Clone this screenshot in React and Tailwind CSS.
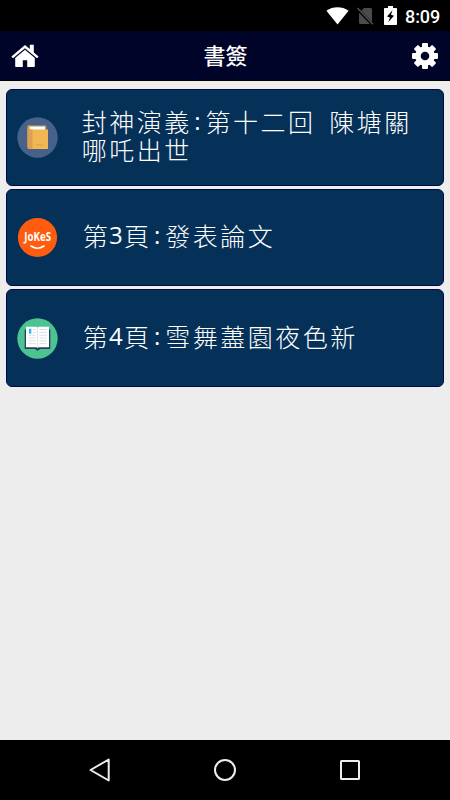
import { Fragment } from "react";

const BOOKMARKS = [
  { id: 1, icon: "book", lines: ["封神演義:第十二回 陳塘關", "哪吒出世"] },
  { id: 2, icon: "jokes", lines: ["第3頁:發表論文"] },
  { id: 3, icon: "reader", lines: ["第4頁:雪舞藎園夜色新"] },
];

function StatusBar() {
  return (
    <div className="flex h-[31px] items-center justify-end bg-black pr-[10px] text-white">
      <svg width="23" height="18" viewBox="0 0 23 18" className="mr-[8px]">
        <path d="M.4 3.7C6.9-.9 16.1-.9 22.6 3.7L11.5 17.5z" fill="#fff" />
      </svg>
      <svg width="17" height="18" viewBox="0 0 17 18" className="mr-[10px]">
        <path d="M7 1h6.5q1.5 0 1.5 1.5V17H3.5Q2 17 2 15.5V6z" fill="#4b4b4b" />
        <path d="M0 1.2L15.5 17.5" stroke="#000" strokeWidth="3" />
        <path d="M.5 1L16 17.3" stroke="#565656" strokeWidth="1.3" />
      </svg>
      <svg width="13" height="19" viewBox="0 0 13 19" className="mr-[8px]">
        <path d="M4 0h5v2h3.2q.8 0 .8.8v15.4q0 .8-.8.8H.8q-.8 0-.8-.8V2.8Q0 2 .8 2H4z" fill="#fff" />
        <path d="M8.5 4.2L3 10.6l3 .9-1.8 4.8 5.8-6.6-3-1z" fill="#000" />
      </svg>
      <span className="w-[35px] whitespace-nowrap pt-[2px] font-['Roboto',sans-serif] text-[18px] font-medium leading-[29px] tracking-[-0.1px]">
        8:09
      </span>
    </div>
  );
}

function HomeIcon() {
  return (
    <svg width="28" height="24" viewBox="0 0 28 24" fill="#fff">
      <path d="M14 1L.7 12.2q-.3.7.3 1.3.8.8 1.6.2L14 4.2l11.4 9.5q.8.6 1.6-.2.6-.6.3-1.3l-4.5-3.8V.8h-4v4.3z" />
      <path d="M14 5.8L4.2 14v8.3q0 .8.8.8h6.8v-6.8h4.4v6.8H23q.8 0 .8-.8V14z" />
    </svg>
  );
}

function GearIcon() {
  return (
    <svg width="26" height="26" viewBox="0 0 26 26">
      <g fill="#fff">
        <rect x="10" y="0" width="6" height="26" rx="1" />
        <rect x="10" y="0" width="6" height="26" rx="1" transform="rotate(45 13 13)" />
        <rect x="10" y="0" width="6" height="26" rx="1" transform="rotate(90 13 13)" />
        <rect x="10" y="0" width="6" height="26" rx="1" transform="rotate(135 13 13)" />
        <circle cx="13" cy="13" r="9.8" />
      </g>
      <circle cx="13" cy="13" r="4.3" fill="#000428" />
    </svg>
  );
}

function BookIcon() {
  return (
    <svg width="41" height="41" viewBox="0 0 41 41">
      <circle cx="20.5" cy="20.5" r="20.2" fill="#47628a" />
      <path d="M12 9.3h16.5V13H12z" fill="#fffdf5" />
      <path d="M10.5 10.5q0-2.2 2-2.2v4.2H31V32H12.5q-2 0-2-2z" fill="#f0b753" />
      <path d="M10.5 10.5q0-2.2 2-2.2v4.2h3V32h-3q-2 0-2-2z" fill="#dda051" />
      <path d="M12 8.6h17v4.2" fill="none" stroke="#b98a5a" strokeWidth=".8" />
      <path d="M18 27h9l-2 2h-5z" fill="#e6aa49" />
    </svg>
  );
}

function JokesIcon() {
  return (
    <svg width="41" height="41" viewBox="0 0 41 41">
      <circle cx="20.5" cy="20.5" r="19.6" fill="#ff5c10" />
      <text
        x="7.3"
        y="23.7"
        textLength="26.8"
        lengthAdjust="spacingAndGlyphs"
        fill="#fff"
        fontSize="13"
        className="font-['Open_Sans',sans-serif] font-bold"
      >
        JoKeS
      </text>
      <path d="M14 29q6.5 4.6 13 0" fill="none" stroke="#fff" strokeWidth="1.6" strokeLinecap="round" />
    </svg>
  );
}

function ReaderIcon() {
  return (
    <svg width="41" height="41" viewBox="0 0 41 41">
      <circle cx="20.5" cy="20.5" r="20.2" fill="#4bc492" />
      <path d="M7.7 11.5h25.6V31H23q-2.5 3.2-5 0H7.7z" fill="#303b63" />
      <path d="M9 8.8h10.5l1 1 1-1H32v20.4H21.5l-1 .8-1-.8H9z" fill="#fff" />
      <path d="M20.5 10v19.5" stroke="#d9dce3" strokeWidth=".8" />
      <path
        d="M16 11.5h2.8M16 14.3h2.8M11.3 17.2h7.5M11.3 20h7.5M11.3 22.8h7.5M11.3 25.6h7.5M22.3 11.5h7.5M22.3 14.3h7.5M22.3 17.2h7.5M22.3 20h7.5M22.3 22.8h7.5M22.3 25.6h7.5"
        stroke="#dcdee4"
        strokeWidth="1"
      />
      <path d="M12 10.7h2.3v5H12z" fill="#24bde4" />
    </svg>
  );
}

const ICONS = { book: BookIcon, jokes: JokesIcon, reader: ReaderIcon };

// Latin characters take half of a CJK cell
function Line({ text }) {
  return (
    <p className="flex h-[28px] whitespace-pre">
      {text.split("").map((ch, i) => (
        <Fragment key={i}>
          {ch.charCodeAt(0) < 128 ? (
            <span className="w-[13.75px] text-center font-['Open_Sans',sans-serif] text-[24px] font-normal">{ch}</span>
          ) : (
            <span className="w-[27.5px] text-center">{ch}</span>
          )}
        </Fragment>
      ))}
    </p>
  );
}

function BookmarkCard({ icon, lines }) {
  const Icon = ICONS[icon];
  return (
    <li className="flex h-[97.3px] items-center rounded-[6px] border border-[#000a42] bg-[#053057] pl-[9.5px]">
      <Icon />
      <div
        className={`${lines.length > 1 ? "ml-[23px]" : "ml-[24px]"} pb-[5px] font-['Noto_Sans_CJK_TC',sans-serif] text-[25px] font-light leading-[28px] text-white`}
      >
        {lines.map((line) => (
          <Line key={line} text={line} />
        ))}
      </div>
    </li>
  );
}

function NavBar() {
  return (
    <nav className="flex h-[60px] items-center justify-between bg-black px-[87px]">
      <svg width="26" height="26" viewBox="0 0 26 26" fill="none" stroke="#eee" strokeWidth="2">
        <path d="M21.7 2.5v21L3.5 13z" strokeLinejoin="round" />
      </svg>
      <svg width="26" height="26" viewBox="0 0 26 26" fill="none" stroke="#eee" strokeWidth="2">
        <circle cx="13" cy="13" r="10" />
      </svg>
      <svg width="26" height="26" viewBox="0 0 26 26" fill="none" stroke="#eee" strokeWidth="2">
        <rect x="4" y="4" width="18" height="18" rx=".5" />
      </svg>
    </nav>
  );
}

export default function App() {
  return (
    <div className="flex h-[800px] w-[450px] flex-col bg-[#ededed]">
      <StatusBar />
      <header className="flex h-[50px] items-center justify-between border-b border-black bg-[#000428] pl-[11px] pr-[12px]">
        <HomeIcon />
        <h1 className="pb-[3px] font-['Noto_Sans_CJK_TC',sans-serif] text-[22px] font-medium leading-[30px] text-white">
          書簽
        </h1>
        <GearIcon />
      </header>
      <ul className="flex flex-1 flex-col gap-[3.1px] px-[6px] pt-[7.6px]">
        {BOOKMARKS.map((b) => (
          <BookmarkCard key={b.id} icon={b.icon} lines={b.lines} />
        ))}
      </ul>
      <NavBar />
    </div>
  );
}
